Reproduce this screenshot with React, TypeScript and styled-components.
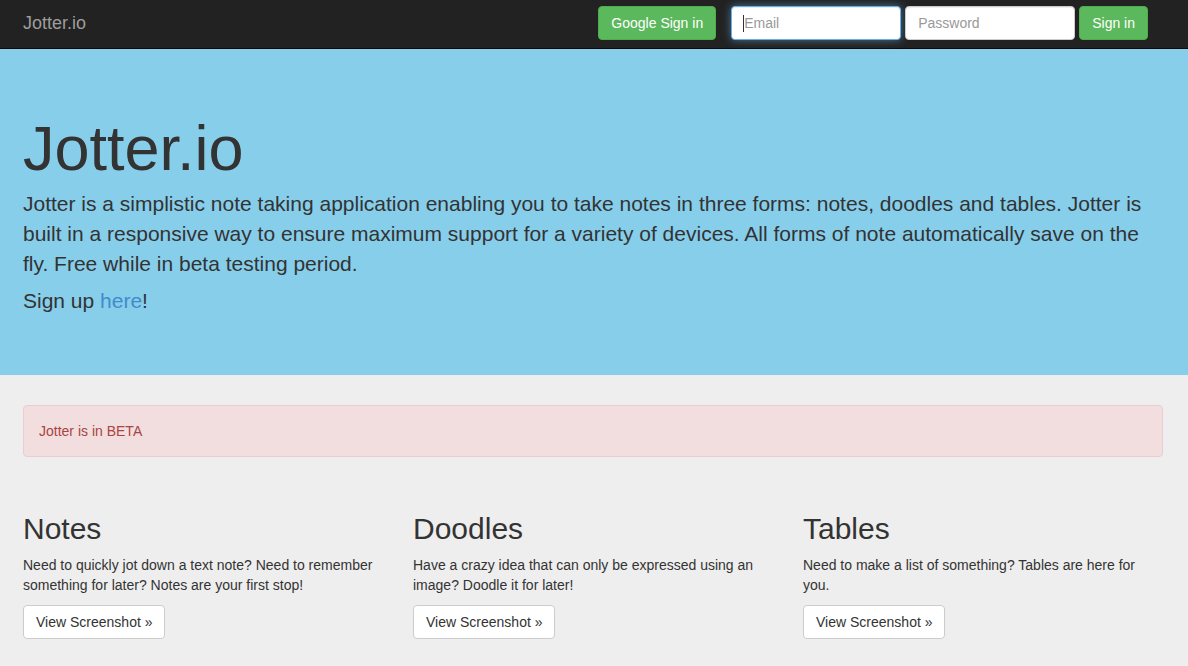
import React from "react";
import styled, { createGlobalStyle } from "styled-components";

const Global = createGlobalStyle`
  html, body { margin: 0; padding: 0; }
  body {
    background: #eeeeee;
    font-family: "Liberation Sans", Arial, Helvetica, sans-serif;
    font-size: 14px;
    line-height: 1.42857;
    color: #333333;
  }
  * { box-sizing: border-box; }
`;

const Navbar = styled.nav`
  height: 49px;
  background: #222222;
  border-bottom: 1px solid #080808;
`;

const NavInner = styled.div`
  display: flex;
  align-items: flex-start;
  justify-content: space-between;
  padding: 0 40px 0 23px;
  height: 48px;
`;

const Brand = styled.a`
  font-size: 18px;
  line-height: 20px;
  color: #9d9d9d;
  text-decoration: none;
  padding-top: 13px;
`;

const NavForm = styled.form`
  display: flex;
  align-items: center;
  padding-top: 6px;
`;

const Button = styled.button<{ $variant?: "success" | "default" }>`
  height: 34px;
  padding: 6px 12px;
  font-family: inherit;
  font-size: 14px;
  line-height: 20px;
  border-radius: 4px;
  border: 1px solid ${(p) => (p.$variant === "success" ? "#4cae4c" : "#cccccc")};
  background: ${(p) => (p.$variant === "success" ? "#5cb85c" : "#ffffff")};
  color: ${(p) => (p.$variant === "success" ? "#ffffff" : "#333333")};
  cursor: pointer;
  white-space: nowrap;
`;

const GoogleButton = styled(Button)`
  margin-right: 15px;
`;

const InputWrap = styled.div<{ $focused?: boolean }>`
  position: relative;
  margin-right: 4px;
  ${(p) =>
    p.$focused
      ? `&::after {
    content: "";
    position: absolute;
    left: 12px;
    top: 9px;
    width: 1px;
    height: 17px;
    background: #333;
  }`
      : ""}
`;

const Input = styled.input<{ $focused?: boolean }>`
  display: block;
  width: 170px;
  height: 34px;
  padding: 6px 12px;
  font-family: inherit;
  font-size: 14px;
  line-height: 20px;
  color: #555555;
  background: #ffffff;
  border-radius: 4px;
  outline: none;
  border: 1px solid ${(p) => (p.$focused ? "#66afe9" : "#cccccc")};
  box-shadow: ${(p) =>
    p.$focused
      ? "inset 0 1px 1px rgba(0,0,0,.075), 0 0 8px rgba(102,175,233,.6)"
      : "inset 0 1px 1px rgba(0,0,0,.075)"};
  &::placeholder { color: #999999; }
`;

const Jumbotron = styled.section`
  background: #87ceeb;
  padding: 65px 23px 59px;
`;

const HeroTitle = styled.h1`
  margin: 0 0 6px;
  font-size: 63px;
  line-height: 69px;
  font-weight: 500;
  color: #333333;
`;

const HeroText = styled.p<{ $last?: boolean }>`
  margin: 0 0 ${(p) => (p.$last ? "0" : "7px")};
  font-size: 21px;
  line-height: 30px;
  font-weight: 200;
  color: #333333;
  max-width: 1140px;
`;

const HeroLink = styled.a`
  color: #428bca;
  text-decoration: none;
`;

const Container = styled.main`
  padding: 30px 25px 0 23px;
`;

const Alert = styled.div`
  padding: 15px;
  border: 1px solid #ebccd1;
  border-radius: 4px;
  background: #f2dede;
  color: #a94442;
  font-size: 14px;
  line-height: 20px;
  margin-bottom: 55px;
`;

const Row = styled.div`
  display: grid;
  grid-template-columns: 360px 360px 360px;
  column-gap: 30px;
`;

const Col = styled.div``;

const ColTitle = styled.h2`
  margin: 0 0 10px;
  font-size: 30px;
  line-height: 33px;
  font-weight: 500;
  color: #333333;
`;

const ColText = styled.p`
  margin: 0 0 10px;
  font-size: 14px;
  line-height: 20px;
`;

const features = [
  {
    title: "Notes",
    text: "Need to quickly jot down a text note? Need to remember something for later? Notes are your first stop!",
  },
  {
    title: "Doodles",
    text: "Have a crazy idea that can only be expressed using an image? Doodle it for later!",
  },
  {
    title: "Tables",
    text: "Need to make a list of something? Tables are here for you.",
  },
];

export default function App() {
  return (
    <>
      <Global />
      <Navbar>
        <NavInner>
          <Brand href="#">Jotter.io</Brand>
          <NavForm onSubmit={(e) => e.preventDefault()}>
            <GoogleButton type="button" $variant="success">
              Google Sign in
            </GoogleButton>
            <InputWrap $focused>
              <Input $focused type="text" placeholder="Email" />
            </InputWrap>
            <InputWrap>
              <Input type="password" placeholder="Password" />
            </InputWrap>
            <Button type="submit" $variant="success">
              Sign in
            </Button>
          </NavForm>
        </NavInner>
      </Navbar>
      <Jumbotron>
        <HeroTitle>Jotter.io</HeroTitle>
        <HeroText>
          Jotter is a simplistic note taking application enabling you to take notes in three forms:
          notes, doodles and tables. Jotter is built in a responsive way to ensure maximum support
          for a variety of devices. All forms of note automatically save on the fly. Free while in
          beta testing period.
        </HeroText>
        <HeroText $last>
          Sign up <HeroLink href="#">here</HeroLink>!
        </HeroText>
      </Jumbotron>
      <Container>
        <Alert>Jotter is in BETA</Alert>
        <Row>
          {features.map((f) => (
            <Col key={f.title}>
              <ColTitle>{f.title}</ColTitle>
              <ColText>{f.text}</ColText>
              <Button type="button">View Screenshot »</Button>
            </Col>
          ))}
        </Row>
      </Container>
    </>
  );
}
